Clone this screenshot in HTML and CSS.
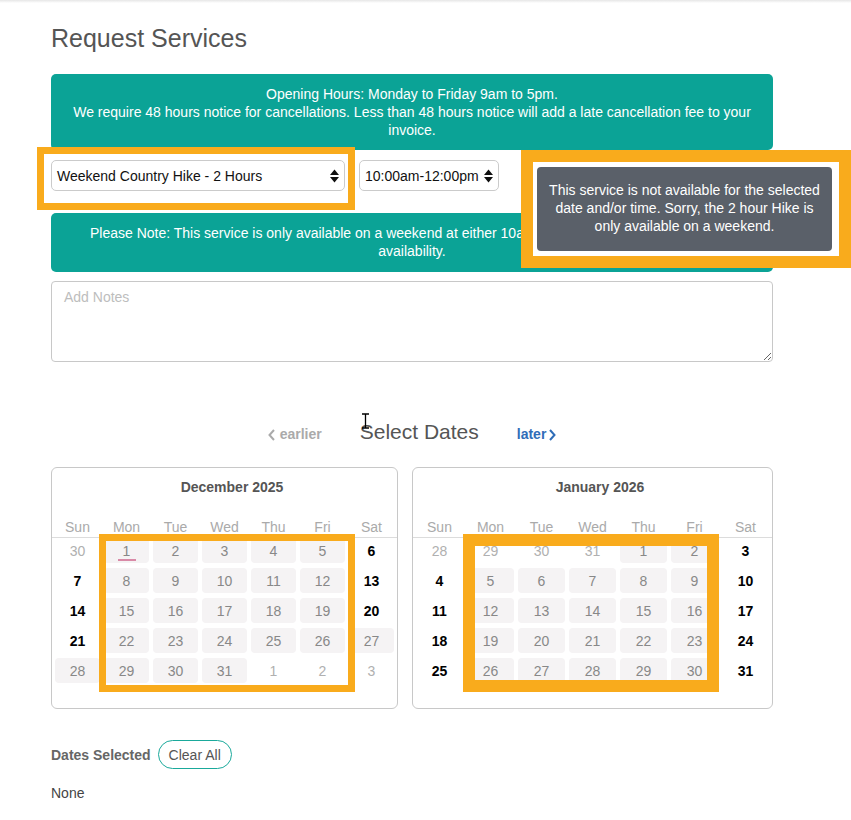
FILE: index.html
```html
<!DOCTYPE html>
<html>
<head>
<meta charset="utf-8">
<link rel="stylesheet" href="styles.css">
</head>
<body>
<div class="topbar"></div>
<div class="page">
  <h1 class="title">Request Services</h1>
  <div class="notice notice-hours">Opening Hours: Monday to Friday 9am to 5pm.<br>We require 48 hours notice for cancellations. Less than 48 hours notice will add a late cancellation fee to your invoice.</div>
  <div class="select-row">
    <div class="select select-service"><span>Weekend Country Hike - 2 Hours</span><svg class="arrows" width="9" height="14" viewBox="0 0 9 14"><path d="M0 6 L4.5 0.5 L9 6 Z M0 8 L9 8 L4.5 13.5 Z" fill="#111"/></svg></div>
    <div class="select select-time"><span>10:00am-12:00pm</span><svg class="arrows" width="9" height="14" viewBox="0 0 9 14"><path d="M0 6 L4.5 0.5 L9 6 Z M0 8 L9 8 L4.5 13.5 Z" fill="#111"/></svg></div>
  </div>
  <div class="notice notice-note">Please Note: This service is only available on a weekend at either 10am or 12pm. Please check here for availability.</div>
  <textarea class="notes" placeholder="Add Notes"></textarea>

  <div class="dates-nav">
    <span class="nav-link nav-earlier"><svg width="7" height="12" viewBox="0 0 7 12"><path d="M6 1 L1.5 6 L6 11" fill="none" stroke="#aaa" stroke-width="2"/></svg>earlier</span>
    <span class="dates-title">Select Dates</span>
    <span class="nav-link nav-later">later<svg width="7" height="12" viewBox="0 0 7 12"><path d="M1 1 L5.5 6 L1 11" fill="none" stroke="#2f6db8" stroke-width="2"/></svg></span>
  </div>

  <div class="calendars">
    <div class="cal cal-dec">
      <div class="cal-month">December 2025</div>
      <div class="cal-head"><span>Sun</span><span>Mon</span><span>Tue</span><span>Wed</span><span>Thu</span><span>Fri</span><span>Sat</span></div>
      <div class="cal-grid">
        <span class="o">30</span><span class="d today">1</span><span class="d">2</span><span class="d">3</span><span class="d">4</span><span class="d">5</span><span class="a">6</span>
        <span class="a">7</span><span class="d">8</span><span class="d">9</span><span class="d">10</span><span class="d">11</span><span class="d">12</span><span class="a">13</span>
        <span class="a">14</span><span class="d">15</span><span class="d">16</span><span class="d">17</span><span class="d">18</span><span class="d">19</span><span class="a">20</span>
        <span class="a">21</span><span class="d">22</span><span class="d">23</span><span class="d">24</span><span class="d">25</span><span class="d">26</span><span class="d">27</span>
        <span class="d">28</span><span class="d">29</span><span class="d">30</span><span class="d">31</span><span class="o">1</span><span class="o">2</span><span class="o">3</span>
      </div>
    </div>
    <div class="cal cal-jan">
      <div class="cal-month">January 2026</div>
      <div class="cal-head"><span>Sun</span><span>Mon</span><span>Tue</span><span>Wed</span><span>Thu</span><span>Fri</span><span>Sat</span></div>
      <div class="cal-grid">
        <span class="o">28</span><span class="o">29</span><span class="o">30</span><span class="o">31</span><span class="d">1</span><span class="d">2</span><span class="a">3</span>
        <span class="a">4</span><span class="d">5</span><span class="d">6</span><span class="d">7</span><span class="d">8</span><span class="d">9</span><span class="a">10</span>
        <span class="a">11</span><span class="d">12</span><span class="d">13</span><span class="d">14</span><span class="d">15</span><span class="d">16</span><span class="a">17</span>
        <span class="a">18</span><span class="d">19</span><span class="d">20</span><span class="d">21</span><span class="d">22</span><span class="d">23</span><span class="a">24</span>
        <span class="a">25</span><span class="d">26</span><span class="d">27</span><span class="d">28</span><span class="d">29</span><span class="d">30</span><span class="a">31</span>
      </div>
    </div>
  </div>

  <div class="selected-row">
    <span class="selected-label">Dates Selected</span>
    <button class="clear-btn">Clear All</button>
  </div>
  <div class="selected-none">None</div>
</div>

<div class="mark mark-select"></div>
<div class="mark mark-tooltip">
  <div class="tooltip">This service is not available for the selected date and/or time. Sorry, the 2 hour Hike is only available on a weekend.</div>
</div>
<div class="mark mark-dec"></div>
<div class="mark mark-jan"></div>
<svg class="ibeam" width="9" height="16" viewBox="0 0 9 16"><path d="M1 1 H8 M4.5 1 V15 M1 15 H8" fill="none" stroke="#000" stroke-width="1.3"/></svg>
</body>
</html>
```
FILE: styles.css
```css
* { box-sizing: border-box; }
html, body { margin: 0; padding: 0; background: #fff; }
body {
  font-family: "Liberation Sans", Arial, sans-serif;
  font-size: 14px;
  color: #444;
  position: relative;
  width: 851px;
  min-height: 820px;
}
.topbar {
  height: 3px;
  background: linear-gradient(#e6e6e6, #fff);
}
.page {
  margin-left: 51px;
  width: 722px;
}
.title {
  margin: 21px 0 0;
  font-size: 25px;
  line-height: 28px;
  font-weight: normal;
  color: #555;
}
.notice {
  background: #0ba396;
  color: #fff;
  border-radius: 5px;
  text-align: center;
  line-height: 18px;
  padding: 11px 20px;
}
.notice-hours { margin-top: 22px; }
.select-row {
  display: flex;
  gap: 14px;
  margin-top: 10px;
  height: 31px;
}
.select {
  display: flex;
  align-items: center;
  justify-content: space-between;
  height: 31px;
  border: 1px solid #cbcbcb;
  border-radius: 5px;
  padding: 0 5px 0 5px;
  color: #111;
  background: #fff;
}
.select-service { width: 294px; }
.select-time { width: 140px; }
.arrows { flex: none; }
.notice-note {
  margin-top: 22px;
  padding: 11px 20px 12px;
}
.notes {
  display: block;
  margin-top: 9px;
  width: 722px;
  height: 81px;
  border: 1px solid #c8c8c8;
  border-radius: 4px;
  padding: 6px 12px;
  font-family: "Liberation Sans", Arial, sans-serif;
  font-size: 14px;
  line-height: 18px;
  color: #444;
  resize: vertical;
}
.notes::placeholder { color: #bdbdbd; }
.dates-nav {
  margin-top: 58px;
  height: 24px;
  display: flex;
  justify-content: center;
  align-items: baseline;
  gap: 38px;
}
.dates-title {
  font-size: 21px;
  line-height: 24px;
  color: #555;
}
.nav-link {
  font-size: 14px;
  font-weight: bold;
  display: inline-flex;
  align-items: baseline;
  gap: 5px;
}
.nav-link svg { align-self: center; position: relative; top: 1px; }
.nav-earlier { color: #aaa; }
.nav-later { color: #2f6db8; gap: 3px; }
.calendars {
  margin-top: 23px;
  display: grid;
  grid-template-columns: 347px 361px;
  column-gap: 14px;
}
.cal {
  border: 1px solid #c8c8c8;
  border-radius: 6px;
  height: 242px;
  padding-top: 10px;
}
.cal-month {
  text-align: center;
  font-weight: bold;
  color: #555;
  line-height: 18px;
  padding-left: 15px;
}
.cal-head, .cal-grid {
  display: grid;
  grid-template-columns: repeat(7, 1fr);
  column-gap: 4px;
  padding: 0 3px;
}
.cal-head {
  margin-top: 22px;
  height: 20px;
  line-height: 19px;
  border-bottom: 1px solid #dcdcdc;
  color: #aaa;
  text-align: center;
}
.cal-grid {
  row-gap: 5px;
  grid-auto-rows: 25px;
}
.cal-grid span {
  display: flex;
  align-items: center;
  justify-content: center;
  border-radius: 4px;
  position: relative;
}
.cal-grid .d { background: #f5f3f4; color: #888; }
.cal-grid .o { color: #b0b0b0; }
.cal-grid .a { color: #000; font-weight: bold; }
.cal-grid .today::after {
  content: "";
  position: absolute;
  left: 50%;
  margin-left: -9px;
  bottom: 2px;
  width: 18px;
  height: 2px;
  background: #d98aa7;
}
.selected-row {
  margin-top: 31px;
  display: flex;
  align-items: center;
  gap: 7px;
  height: 29px;
}
.selected-label {
  font-size: 14px;
  font-weight: bold;
  color: #666;
}
.clear-btn {
  height: 29px;
  padding: 0 10px;
  border: 1.5px solid #1aa99b;
  border-radius: 15px;
  background: #fff;
  font-family: "Liberation Sans", Arial, sans-serif;
  font-size: 14px;
  color: #555;
}
.selected-none {
  margin-top: 15px;
  line-height: 18px;
  color: #444;
}
.mark {
  position: absolute;
  border: 7px solid #f9ab1c;
}
.mark-select { left: 37px; top: 147px; width: 318px; height: 63px; }
.mark-dec { left: 99px; top: 534px; width: 256px; height: 158px; }
.mark-jan { left: 463px; top: 534px; width: 256px; height: 158px; border-width: 12px; }
.mark-tooltip {
  left: 521px; top: 150px; width: 330px; height: 118px;
  border-width: 12px;
  background: #fff;
  padding: 5px 7px 5px 4px;
}
.tooltip {
  height: 100%;
  background: #5a6069;
  color: #fff;
  border-radius: 4px;
  text-align: center;
  line-height: 18px;
  padding: 14px 10px 0;
}
.ibeam { position: absolute; left: 361px; top: 413px; }
```
